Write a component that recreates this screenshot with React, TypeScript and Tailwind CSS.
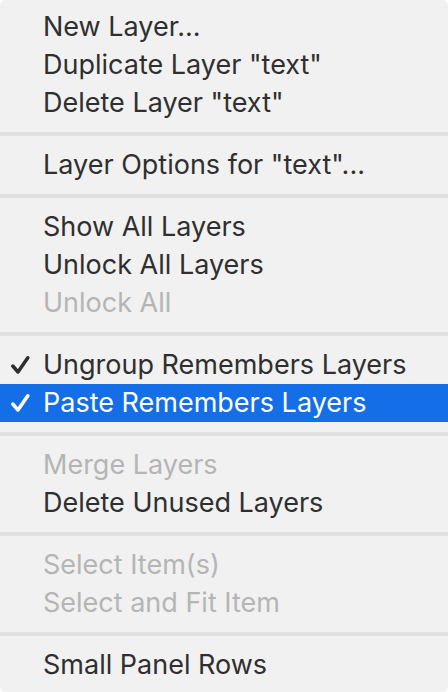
import React from 'react';

type Item =
  | { kind: 'item'; label: string; disabled?: boolean; checked?: boolean; active?: boolean }
  | { kind: 'sep' };

const items: Item[] = [
  { kind: 'item', label: 'New Layer...' },
  { kind: 'item', label: 'Duplicate Layer "text"' },
  { kind: 'item', label: 'Delete Layer "text"' },
  { kind: 'sep' },
  { kind: 'item', label: 'Layer Options for "text"...' },
  { kind: 'sep' },
  { kind: 'item', label: 'Show All Layers' },
  { kind: 'item', label: 'Unlock All Layers' },
  { kind: 'item', label: 'Unlock All', disabled: true },
  { kind: 'sep' },
  { kind: 'item', label: 'Ungroup Remembers Layers', checked: true },
  { kind: 'item', label: 'Paste Remembers Layers', checked: true, active: true },
  { kind: 'sep' },
  { kind: 'item', label: 'Merge Layers', disabled: true },
  { kind: 'item', label: 'Delete Unused Layers' },
  { kind: 'sep' },
  { kind: 'item', label: 'Select Item(s)', disabled: true },
  { kind: 'item', label: 'Select and Fit Item', disabled: true },
  { kind: 'sep' },
  { kind: 'item', label: 'Small Panel Rows' },
];

function Check({ color }: { color: string }) {
  return (
    <svg width="20" height="20" viewBox="0 0 20 20" fill="none" className="block">
      <polyline
        points="2.8,11 8,17 17.8,2.8"
        stroke={color}
        strokeWidth="3.5"
        strokeLinecap="round"
        strokeLinejoin="round"
      />
    </svg>
  );
}

export default function App() {
  return (
    <div className="w-[448px] h-[692px] bg-white">
      <div
        className="w-full h-full bg-[#f1f1f1] rounded-[6px] overflow-hidden pt-[8px] text-[27px]"
        style={{ fontFamily: 'Inter, "Noto Sans", sans-serif' }}
      >
        {items.map((it, i) => {
          if (it.kind === 'sep') {
            return (
              <div key={i} className="h-[24px] flex items-center">
                <div className="w-full h-[4px] bg-[#e0e0e0]" />
              </div>
            );
          }
          const text = it.active ? 'text-white' : it.disabled ? 'text-[#b5b5b5]' : 'text-[#2f2f2f]';
          return (
            <div
              key={i}
              className={`relative h-[38px] leading-[38px] pl-[43px] whitespace-nowrap ${text} ${it.active ? 'bg-[#136ee8]' : ''}`}
            >
              {it.checked && (
                <span className="absolute left-[10px] top-[9px]">
                  <Check color={it.active ? '#ffffff' : '#2f2f2f'} />
                </span>
              )}
              {it.label}
            </div>
          );
        })}
      </div>
    </div>
  );
}
